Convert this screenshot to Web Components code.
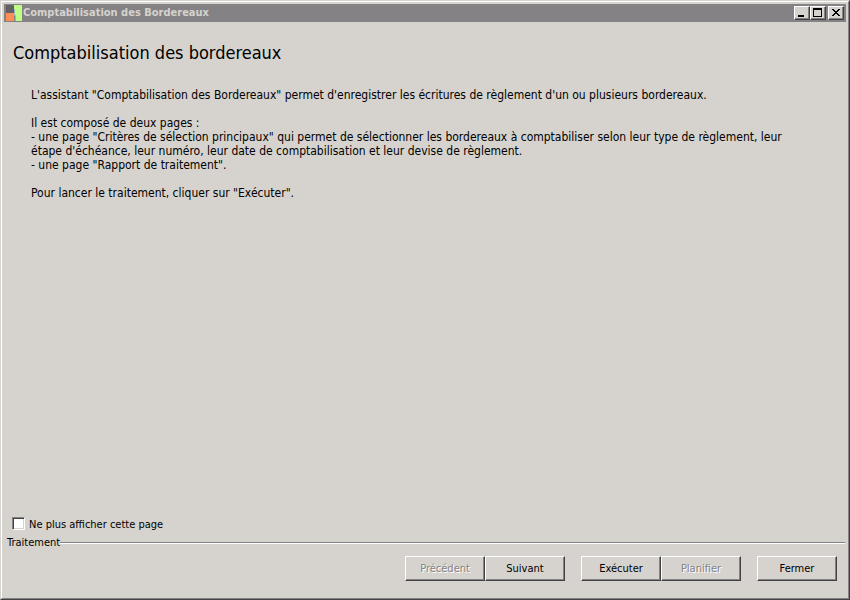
<!DOCTYPE html>
<html lang="fr">
	<head>
		<meta charset="utf-8">
		<meta name="viewport" content="width=device-width, initial-scale=1">
		<title>Comptabilisation des Bordereaux</title>
		<style>
			:root {
				--face: #d6d3ce;
				--light: #ffffff;
				--shadow: #848284;
				--dark: #424142;
			}
			body {
				background: var(--face);
				color: #000;
				font: 11px/14px "DejaVu Sans Condensed", "Open Sans", sans-serif;
				margin: 0;
			}
		</style>
	</head>
	<body>
		<wizard-window>
			<title-bar slot="title">Comptabilisation des Bordereaux</title-bar>
			<wizard-page>
				<span slot="heading">Comptabilisation des bordereaux</span>
				<p>L'assistant "Comptabilisation des Bordereaux" permet d'enregistrer les écritures de règlement d'un ou plusieurs bordereaux.</p>
				<p>Il est composé de deux pages :<br>
				- une page "Critères de sélection principaux" qui permet de sélectionner les bordereaux à comptabiliser selon leur type de règlement, leur étape d'échéance, leur numéro, leur date de comptabilisation et leur devise de règlement.<br>
				- une page "Rapport de traitement".</p>
				<p>Pour lancer le traitement, cliquer sur "Exécuter".</p>
			</wizard-page>
			<check-option slot="footer">Ne plus afficher cette page</check-option>
			<action-group slot="footer" label="Traitement">
				<div>
					<push-button disabled>Précédent</push-button>
					<push-button>Suivant</push-button>
				</div>
				<div>
					<push-button>Exécuter</push-button>
					<push-button disabled>Planifier</push-button>
				</div>
				<div>
					<push-button>Fermer</push-button>
				</div>
			</action-group>
		</wizard-window>
		<script>
			"use strict";
			(function() {
				function render(host, html) {
					host.attachShadow({ mode: "open" }).innerHTML = html;
				}

				class WizardWindow extends HTMLElement {
					constructor() {
						super();
						render(this, `
							<style>
								:host {
									border: 1px solid;
									border-color: var(--face) var(--dark) var(--dark) var(--face);
									box-sizing: border-box;
									display: flex;
									min-height: 100vh;
								}
								.frame {
									border: 1px solid;
									border-color: var(--light) var(--shadow) var(--shadow) var(--light);
									display: flex;
									flex: 1;
									flex-direction: column;
									padding: 2px;
								}
								main { flex: 1; }
							</style>
							<div class="frame">
								<slot name="title"></slot>
								<main><slot></slot></main>
								<slot name="footer"></slot>
							</div>
						`);
					}
				}

				class TitleBar extends HTMLElement {
					constructor() {
						super();
						render(this, `
							<style>
								:host {
									align-items: center;
									background: var(--shadow);
									color: var(--face);
									display: flex;
									font-weight: bold;
									height: 18px;
									padding: 0 2px 0 1px;
								}
								.caption {
									flex: 1;
									padding-left: 1px;
								}
								.controls { display: flex; }
								button {
									background: var(--face);
									border: 1px solid;
									border-color: var(--light) var(--dark) var(--dark) var(--light);
									box-shadow: inset -1px -1px var(--shadow);
									height: 14px;
									padding: 0;
									width: 16px;
								}
								button svg { display: block; }
								.close { margin-left: 2px; }
							</style>
							<svg width="17" height="16" shape-rendering="crispEdges" aria-hidden="true">
								<path d="M1 0h8v8H1z" fill="#636163"/>
								<path d="M1 8h8v8H1z" fill="#ff8e52"/>
								<path d="M9 0h8v16h-6v-6h-1V4H9z" fill="#bdff84"/>
								<path d="M9 4h1v6h1v6h-1v-5H9z" fill="#9cb6bd"/>
							</svg>
							<span class="caption"><slot></slot></span>
							<div class="controls">
								<button aria-label="Réduire"><svg width="14" height="12" shape-rendering="crispEdges"><path d="M3 8h6v2H3z"/></svg></button>
								<button aria-label="Agrandir"><svg width="14" height="12" shape-rendering="crispEdges"><path fill-rule="evenodd" d="M2 1h9v9H2zM3 3v6h7V3z"/></svg></button>
								<button class="close" aria-label="Fermer"><svg width="14" height="12" shape-rendering="crispEdges"><path d="M3 2h2v1h1v1h2V3h1V2h2v1h-1v1H9v1H8v1h1v1h1v1h1v1H9V8H8V7H6v1H5v1H3V8h1V7h1V6h1V5H5V4H4V3H3z"/></svg></button>
							</div>
						`);
					}
				}

				class WizardPage extends HTMLElement {
					constructor() {
						super();
						render(this, `
							<style>
								:host {
									display: block;
									padding: 20px 34px 20px 9px;
								}
								h1 {
									font-size: 18px;
									font-weight: normal;
									line-height: 22px;
									margin: 0 0 24px;
								}
								.text {
									font-size: 12px;
									padding-left: 18px;
								}
								::slotted(p) { margin: 0 0 14px; }
							</style>
							<h1><slot name="heading"></slot></h1>
							<div class="text"><slot></slot></div>
						`);
					}
				}

				class CheckOption extends HTMLElement {
					constructor() {
						super();
						render(this, `
							<style>
								:host {
									display: flex;
									padding: 0 8px 4px;
								}
								label {
									align-items: flex-start;
									display: flex;
									gap: 4px;
								}
								input {
									appearance: none;
									background: #fff;
									border: 1px solid;
									border-color: var(--shadow) var(--light) var(--light) var(--shadow);
									box-shadow: inset 1px 1px var(--dark), inset -1px -1px var(--face);
									box-sizing: border-box;
									height: 13px;
									margin: 0;
									width: 13px;
								}
								input:checked { background: #000; }
								span { padding-top: 1px; }
							</style>
							<label><input type="checkbox"><span><slot></slot></span></label>
						`);
					}
				}

				class ActionGroup extends HTMLElement {
					constructor() {
						super();
						render(this, `
							<style>
								:host { display: block; }
								fieldset {
									border: 0;
									margin: 0;
									min-width: 0;
									padding: 0;
								}
								legend {
									align-items: center;
									box-sizing: border-box;
									display: flex;
									padding: 0 1px 0 3px;
									width: 100%;
								}
								legend::after {
									border-bottom: 1px solid var(--light);
									border-top: 1px solid var(--shadow);
									content: "";
									flex: 1;
								}
								.actions {
									display: flex;
									gap: 16px;
									justify-content: flex-end;
									padding: 6px 9px 15px;
								}
								::slotted(div) { display: flex; }
							</style>
							<fieldset>
								<legend></legend>
								<div class="actions"><slot></slot></div>
							</fieldset>
						`);
						this.shadowRoot.querySelector("legend").textContent = this.getAttribute("label");
					}
				}

				class PushButton extends HTMLElement {
					constructor() {
						super();
						render(this, `
							<style>
								:host { display: block; }
								button {
									background: var(--face);
									border: 1px solid;
									border-color: var(--light) var(--dark) var(--dark) var(--light);
									box-shadow: inset -1px -1px var(--shadow);
									color: inherit;
									display: block;
									font: inherit;
									height: 25px;
									padding: 0 2px;
									width: 80px;
								}
								button:disabled {
									color: var(--shadow);
									text-shadow: 1px 1px var(--light);
								}
							</style>
							<button><slot></slot></button>
						`);
						this.shadowRoot.querySelector("button").disabled = this.hasAttribute("disabled");
					}
				}

				window.customElements.define("wizard-window", WizardWindow);
				window.customElements.define("title-bar", TitleBar);
				window.customElements.define("wizard-page", WizardPage);
				window.customElements.define("check-option", CheckOption);
				window.customElements.define("action-group", ActionGroup);
				window.customElements.define("push-button", PushButton);
			})();
		</script>
	</body>
</html>
